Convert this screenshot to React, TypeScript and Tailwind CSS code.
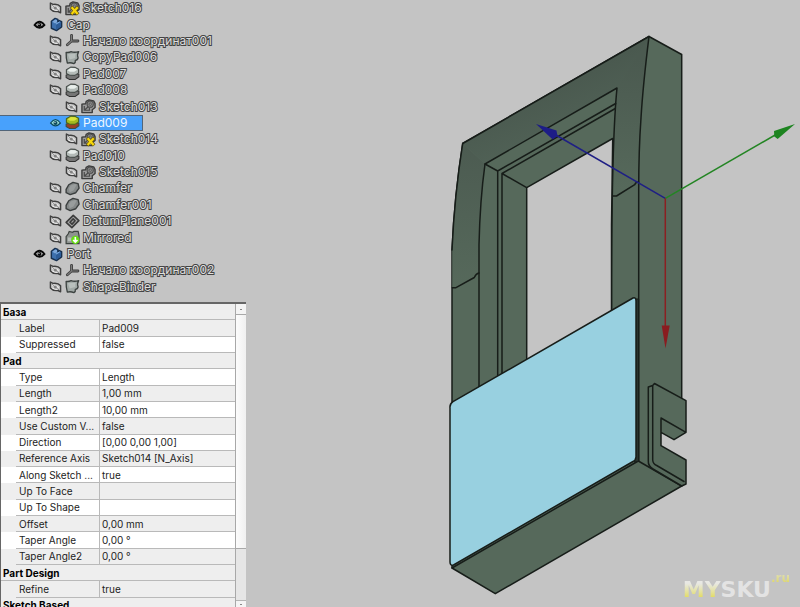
import React from 'react';

type IconKind = 'sketch' | 'sketchBad' | 'body' | 'origin' | 'copy' | 'pad' | 'padActive' | 'chamfer' | 'datum' | 'mirrored';
type Level = 0 | 1 | 2;

interface TreeItem {
  name: string;
  icon: IconKind;
  level: Level;
  visible?: boolean;
  selected?: boolean;
}

const tree: TreeItem[] = [
  { name: 'Sketch016', icon: 'sketchBad', level: 1 },
  { name: 'Cap', icon: 'body', level: 0, visible: true },
  { name: 'Начало координат001', icon: 'origin', level: 1 },
  { name: 'CopyPad006', icon: 'copy', level: 1 },
  { name: 'Pad007', icon: 'pad', level: 1 },
  { name: 'Pad008', icon: 'pad', level: 1 },
  { name: 'Sketch013', icon: 'sketch', level: 2 },
  { name: 'Pad009', icon: 'padActive', level: 1, visible: true, selected: true },
  { name: 'Sketch014', icon: 'sketchBad', level: 2 },
  { name: 'Pad010', icon: 'pad', level: 1 },
  { name: 'Sketch015', icon: 'sketch', level: 2 },
  { name: 'Chamfer', icon: 'chamfer', level: 1 },
  { name: 'Chamfer001', icon: 'chamfer', level: 1 },
  { name: 'DatumPlane001', icon: 'datum', level: 1 },
  { name: 'Mirrored', icon: 'mirrored', level: 1 },
  { name: 'Port', icon: 'body', level: 0, visible: true },
  { name: 'Начало координат002', icon: 'origin', level: 1 },
  { name: 'ShapeBinder', icon: 'copy', level: 1 },
];

const indent: Record<Level, string> = { 0: 'pl-[33px]', 1: 'pl-[49px]', 2: 'pl-[65px]' };

interface PropertyRow {
  label: string;
  value?: string;
  group?: boolean;
  shaded?: boolean;
}

const properties: PropertyRow[] = [
  { label: 'База', group: true },
  { label: 'Label', value: 'Pad009', shaded: true },
  { label: 'Suppressed', value: 'false' },
  { label: 'Pad', group: true },
  { label: 'Type', value: 'Length' },
  { label: 'Length', value: '1,00 mm', shaded: true },
  { label: 'Length2', value: '10,00 mm' },
  { label: 'Use Custom V...', value: 'false', shaded: true },
  { label: 'Direction', value: '[0,00 0,00 1,00]' },
  { label: 'Reference Axis', value: 'Sketch014 [N_Axis]', shaded: true },
  { label: 'Along Sketch ...', value: 'true' },
  { label: 'Up To Face', value: '', shaded: true },
  { label: 'Up To Shape', value: '' },
  { label: 'Offset', value: '0,00 mm', shaded: true },
  { label: 'Taper Angle', value: '0,00 °' },
  { label: 'Taper Angle2', value: '0,00 °', shaded: true },
  { label: 'Part Design', group: true },
  { label: 'Refine', value: 'true', shaded: true },
  { label: 'Sketch Based', group: true },
];

function EyeIcon({ visible, selected }: { visible?: boolean; selected?: boolean }) {
  if (visible) {
    const ink = selected ? '#0d4a5c' : '#080808';
    return (
      <svg viewBox="0 0 13 12" className="h-3 w-[13px]" aria-hidden="true">
        <path d="M1.600 6Q6.500 -.6 11.400 6Q6.500 11.600 1.600 6Z" fill={selected ? '#9fe0d8' : '#e2e2e2'} stroke={ink} strokeWidth={selected ? 1.2 : 1.9} />
        <circle cx="6.500" cy="6" r="2" fill={ink} />
        <circle cx="6" cy="5.300" r=".6" fill="#fff" />
      </svg>
    );
  }
  return (
    <svg viewBox="0 0 13 12" className="h-3 w-[13px]" aria-hidden="true">
      <path d="M1.400 1L4 2.400Q9 1.600 11.600 4.800V10.800L9 9.500Q4 10.200 1.400 7Z" fill="#c6c6c6" stroke="#404040" strokeWidth="1.400" strokeLinejoin="round" />
      <path d="M3 4.200Q6 3.200 9.800 6.600M3.200 7Q6 8.900 9.300 8.200" fill="none" stroke="#f2f2f2" strokeWidth="1" />
      <circle cx="6.300" cy="5.900" r="1.500" fill="#858585" />
      <path d="M2.500 2.800L10.300 9.200" stroke="#7c7c7c" strokeWidth=".8" />
    </svg>
  );
}

function SketchShape() {
  return (
    <>
      <path d="M5.500 2.500L8.500 1L13.500 2L15 5V9L12 11.500V14.500H1V5.500L5 5Z" fill="#9a9a9a" stroke="#3c3c3c" strokeWidth="1.500" strokeLinejoin="round" />
      <path d="M3.500 7.500V12H9V9.500M3.500 12L8 8" fill="none" stroke="#4b4b4b" strokeWidth="1.300" />
      <circle cx="9.800" cy="5.500" r="3.300" fill="#858585" stroke="#4a4a4a" strokeWidth="1.100" />
      <circle cx="9.800" cy="5.500" r="1.200" fill="#b5b5b5" stroke="#454545" strokeWidth=".8" />
    </>
  );
}

function NodeIcon({ kind }: { kind: IconKind }) {
  return (
    <svg viewBox="0 0 16 16" className="h-[15px] w-[15px] shrink-0" aria-hidden="true">
      {(kind === 'sketch' || kind === 'sketchBad') && <SketchShape />}
      {kind === 'sketchBad' && (
        <g strokeLinecap="square">
          <path d="M7.800 7.500L12.800 13M12.800 7.500L7.800 13" stroke="#6a5a08" strokeWidth="3.600" />
          <path d="M7.800 7.500L12.800 13M12.800 7.500L7.800 13" stroke="#f7d70c" strokeWidth="2.300" />
        </g>
      )}
      {kind === 'body' && (
        <g stroke="#17304f" strokeLinejoin="round">
          <path d="M2.500 4.500L6.500 1.500L9.500 2.500V5L11 3.800L13.500 5V10.500L8 14.500L2.500 12Z" fill="#3d70ad" strokeWidth="1.500" />
          <path d="M3.500 5L6.500 2.700L8.500 3.300V5.500L6.500 7Z" fill="#7ba6d8" stroke="none" />
          <path d="M7.500 8.200L12.600 5.700V10L7.500 13.500Z" fill="#2c5b96" stroke="none" />
          <path d="M7.500 7.500L11.500 5.200" stroke="#82b2e6" strokeWidth="1" />
        </g>
      )}
      {kind === 'origin' && (
        <g fill="none" strokeLinecap="round" strokeLinejoin="round">
          <path d="M7 2.500V8.500L2.500 12.500M7 8.500H13.800" stroke="#3b3b3b" strokeWidth="3" />
          <path d="M7 2.500V8.500L2.500 12.500M7 8.500H13.800" stroke="#7c7c7c" strokeWidth="1.200" />
        </g>
      )}
      {kind === 'copy' && (
        <>
          <path d="M1.200 2.500Q4 3 6.500 1.800Q10 3 14.600 1.800Q12.500 5 14 8.500Q13.500 11 11 11Q11.500 13.500 9.500 14.500Q6 13 2.500 14Q1 9 1.200 2.500Z" fill="#a1a9a6" stroke="#3c4240" strokeWidth="1.400" strokeLinejoin="round" />
          <path d="M3 4.500Q7 4 11.500 4Q10.500 6 11 8.500L5 10Z" fill="#b9c0bd" />
        </>
      )}
      {(kind === 'pad' || kind === 'padActive') && (
        <g strokeLinejoin="round">
          <path d="M1.200 9.500L5 8.500H14.800V11.500L11 14.300L5 14.500L1.200 12.200Z" fill={kind === 'pad' ? '#757575' : '#9b3f25'} stroke={kind === 'pad' ? '#303030' : '#394d43'} strokeWidth="1.100" />
          <path d="M1.500 4L6 1.200L11 1.500L14.500 3.500V7.500L10.500 10L5 9.800L1.500 8Z" fill={kind === 'pad' ? '#b4bbb8' : '#a3ba20'} stroke={kind === 'pad' ? '#494f4c' : '#50661c'} strokeWidth="1.200" />
          <path d="M2.700 4.400L6.300 2.200L10.800 2.500L13.300 4L9.800 6.200L5.300 6Z" fill={kind === 'pad' ? '#e9efec' : '#dbe43c'} />
        </g>
      )}
      {kind === 'chamfer' && (
        <>
          <path d="M1.200 9L4 4L8.500 1.500L14 2.800L15 7.500L11.500 12.500L5.500 14.500L1.200 12.500Z" fill="#858989" stroke="#3b3f3f" strokeWidth="1.500" strokeLinejoin="round" />
          <path d="M4 8L6 4.800L10.500 3.200L12.500 4L9 10L5 12Z" fill="#999d9d" />
        </>
      )}
      {kind === 'datum' && (
        <g fill="#a4a4a4" stroke="#3b3b3b" strokeWidth="1.700" strokeLinejoin="round">
          <path d="M1.200 9L8.800 1.500L14.800 7L7.300 14.500Z" />
          <path d="M5.300 8.800L8.700 5.200L10.800 7.200L7.500 10.800Z" />
        </g>
      )}
      {kind === 'mirrored' && (
        <>
          <path d="M1.200 7L3.500 4L4.500 1.500L8 2.500L9.500 1.500H14L15 6V14.500H1.200Z" fill="#8e9390" stroke="#3e4441" strokeWidth="1.300" />
          <path d="M3 8H7V12H3Z" fill="#b9bfbb" />
          <circle cx="11" cy="10.500" r="4.400" fill="#65df12" />
          <path d="M11 7.500V12.500M8.700 10.700L11 13L13.300 10.700" fill="none" stroke="#fff" strokeWidth="1.700" />
        </>
      )}
    </svg>
  );
}

function ModelTree() {
  return (
    <ul role="tree" aria-label="Model" className="grid h-[295px] shrink-0 auto-rows-fr text-[12px] leading-4">
      {tree.map((item) => (
        <li
          key={item.name}
          role="treeitem"
          aria-selected={!!item.selected}
          className={`flex items-center gap-[3px] whitespace-nowrap ${indent[item.level]} ${
            item.selected ? 'w-[143px] border-y border-r border-[#526579] bg-[#48a1fc] text-[#eef7ff]' : 'text-[#dedede]'
          }`}
        >
          <button type="button" aria-label={`Toggle visibility of ${item.name}`} className="shrink-0">
            <EyeIcon visible={item.visible} selected={item.selected} />
          </button>
          <NodeIcon kind={item.icon} />
          <span className={item.selected ? '' : '[-webkit-text-stroke:2px_#444444] [paint-order:stroke_fill]'}>{item.name}</span>
        </li>
      ))}
    </ul>
  );
}

function PropertyPanel() {
  return (
    <section aria-label="Properties" className="flex min-h-0 flex-1 overflow-hidden border-t-2 border-l border-[#666666] bg-[#eeeeee]">
      <div className="min-w-0 flex-1 overflow-hidden">
        <table className="h-[310px] w-full table-fixed border-separate border-spacing-0 text-[10px] leading-[14px] text-[#1c1c1c]">
          <colgroup>
            <col className="w-[15px]" />
            <col className="w-[84px]" />
            <col />
          </colgroup>
          <tbody>
            {properties.map((row) =>
              row.group ? (
                <tr key={row.label} className="bg-[#eeeeee]">
                  <th colSpan={3} scope="rowgroup" className="border-b border-[#b9b9b9] p-0 pl-0.5 text-left font-bold text-black">
                    {row.label}
                  </th>
                </tr>
              ) : (
                <tr key={row.label} className={row.shaded ? 'bg-[#eeeeee]' : 'bg-white'}>
                  <td className="p-0" />
                  <th scope="row" className="border-r border-b border-[#b9b9b9] p-0 pl-[3px] text-left font-normal whitespace-nowrap">
                    {row.label}
                  </th>
                  <td className="border-b border-[#b9b9b9] p-0 pl-0.5 whitespace-nowrap">{row.value}</td>
                </tr>
              ),
            )}
          </tbody>
        </table>
      </div>
      <div className="flex w-[11px] flex-col border-l border-[#a8a8a8] bg-[#e6e6e6]">
        <button type="button" aria-label="Scroll up" className="flex h-[11px] items-center justify-center border-b border-[#a8a8a8] bg-[#f4f4f4]">
          <span className="h-px w-0.5 bg-[#888888]" />
        </button>
        <div className="flex-1">
          <div className="h-[82%] border-b border-[#a8a8a8] bg-gradient-to-r from-[#fcfcfc] to-[#f0f0f0]" />
        </div>
        <button type="button" aria-label="Scroll down" className="flex h-[7px] items-center justify-center border-t border-[#b5b5b5] bg-[#f4f4f4]">
          <span className="h-px w-0.5 bg-[#888888]" />
        </button>
      </div>
    </section>
  );
}

function Model() {
  return (
    <svg viewBox="246 0 554 607" className="h-full w-full" role="img" aria-label="3D view of the part">
      <defs>
        <linearGradient id="bevel" x1="560" y1="80" x2="590" y2="150" gradientUnits="userSpaceOnUse">
          <stop offset="0" stopColor="#4a594f" />
          <stop offset="1" stopColor="#536559" />
        </linearGradient>
        <linearGradient id="bevelLeft" x1="0" y1="143" x2="0" y2="288" gradientUnits="userSpaceOnUse">
          <stop offset="0" stopColor="#4c5b51" />
          <stop offset="1" stopColor="#56695b" />
        </linearGradient>
        <linearGradient id="bevelRight" x1="0" y1="60" x2="0" y2="190" gradientUnits="userSpaceOnUse">
          <stop offset="0" stopColor="#4b5a50" />
          <stop offset="1" stopColor="#56695b" />
        </linearGradient>
      </defs>
      <g stroke="#171d19" strokeWidth="1.500" strokeLinejoin="round" strokeLinecap="round">
        {/* outer body and bevelled front */}
        <path d="M649 36.500L681.700 54.500V486L495.300 593.700L452 568V250Q454.500 195 462.700 143.500Z" fill="#56695b" />
        <path d="M649 36.500L462.700 143.500L485 164L617 88V150H639Q639 110 649 36.500Z" fill="url(#bevel)" stroke="none" />
        <path d="M462.700 143.500Q454.500 195 452.300 250V287.700H456L474.300 277.300L479 273V240Q480 200 485 164Z" fill="url(#bevelLeft)" stroke="none" />
        <path d="M617 88L649 36.500Q639 110 638.700 183L634.700 184.700L616.700 195.700H611.500Q612 130 617 88Z" fill="url(#bevelRight)" stroke="none" />
        <path d="M462.700 143.500L649 36.500" fill="none" />
        <path d="M462.700 143.500Q454.500 195 452 250" fill="none" />
        {/* recess and window */}
        <path d="M485 164L617 88Q611.300 145 611.500 312L479 390V245Q480 200 485 164Z" fill="#56695b" />
        <path d="M526.700 187.700L612.700 138.500L611.500 225V314L526.700 361Z" fill="#c4c4c4" />
        <path d="M485 164L497.700 171V376M497.700 171L615.700 103.500M526.700 187.700L502 173.500V374M502 173.500L615.300 108.500" fill="none" />
        <path d="M649 36.500Q643 85 641 118Q638.700 150 638.700 190V461" fill="none" />
        <path d="M613 196H616.500L634.700 184.700Q635.700 182 638.500 182M452.300 287.700H456L474.300 277.500Q476 273.500 479 273" fill="none" />
        {/* lower edge and plate */}
        <path d="M452 568L638.300 461L681.700 486" fill="none" />
        <path d="M635.500 299H638.700V461L635 462Z" fill="#2a342e" strokeWidth="1" />
        <path d="M450 408Q449.500 404 453 401.700L633 298Q636 297 636 301V457Q635.500 460.500 633 461.500L453.500 565Q450 566 450 562Z" fill="#98d0e0" />
        {/* side clip */}
        <path d="M648.500 388L653 384.500L654.500 383.500L686 400.700V432.300L674 439.700L661 432.300V445.700L686 460V484L681.700 486L653 469Q648 466 648.300 461Z" fill="#56695b" stroke="none" />
        <path d="M661 432.300L674 439.700L686 432.300V460L661 445.700Z" fill="#c4c4c4" stroke="none" />
        <path d="M661 418V445.700L686 460V484L681.700 486L653 469Q648 466 648.300 461V387L652.700 385.500L654.500 383.500L686 400.700V432.300L674 439.700L661 432.300M661 418L686 432.300M652.700 385.500V460Q653 464 656.700 465.500L684 481.500" fill="none" />
      </g>
      <g fill="none" strokeWidth="1.500">
        <path d="M665.300 198.300L555 134.500" stroke="#1f1f85" />
        <path d="M665.300 198.300L776 134.500" stroke="#238523" />
        <path d="M665.300 198.300V327" stroke="#8c1f22" />
      </g>
      <path d="M536 124L556.500 130.500L557.500 136L552.700 139.500Z" fill="#1d1d87" />
      <path d="M795 124L774 131L774.300 136.500L777.700 139Z" fill="#1d8420" />
      <path d="M661.700 325.500H669.700L665.500 348.500Z" fill="#8a1c20" />
    </svg>
  );
}

export default function App() {
  return (
    <div className="relative flex h-screen overflow-hidden bg-[#c4c4c4] font-['Inter','Noto_Sans',sans-serif]">
      <aside className="flex w-[246px] shrink-0 flex-col gap-[7px]">
        <ModelTree />
        <PropertyPanel />
      </aside>
      <main className="min-w-0 flex-1">
        <Model />
      </main>
      <div className="absolute right-[10px] bottom-[6px] flex items-start font-['DejaVu_Sans',sans-serif] font-bold">
        <span className="pt-2 text-[22px] leading-[22px] text-[#e3e3e3]">
          <span className="bg-gradient-to-b from-[#e8e8e4] from-25% to-[#e2d93f] to-90% bg-clip-text text-transparent">MY</span>SKU
        </span>
        <span className="bg-gradient-to-b from-[#dfdfc8] to-[#e0d74a] bg-clip-text text-[12px] leading-[14px] text-transparent">.ru</span>
      </div>
    </div>
  );
}
